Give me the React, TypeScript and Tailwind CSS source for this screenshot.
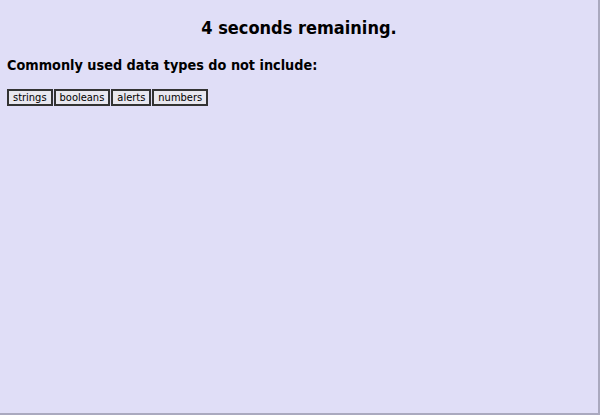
export default function App() {
  const options = ['strings', 'booleans', 'alerts', 'numbers']

  return (
    <div className="w-[600px] h-[415px] bg-[#e0def7] border-r-2 border-b-2 border-[#aaa9bf] font-['DejaVu_Sans_Condensed',sans-serif] text-black">
      <h1 className="pt-[15px] text-center text-[18px] font-bold leading-[26px]">
        4 seconds remaining.
      </h1>
      <h2 className="mt-[13px] px-[7px] text-[14.3px] font-bold leading-[22px]">
        Commonly used data types do not include:
      </h2>
      <div className="mt-[13px] flex gap-[1px] px-[7px]">
        {options.map((o) => (
          <button
            key={o}
            className="h-[17px] border-2 border-[#333] bg-[#e8e7ef] px-[4px] text-[11px] leading-[13px]"
          >
            {o}
          </button>
        ))}
      </div>
    </div>
  )
}
